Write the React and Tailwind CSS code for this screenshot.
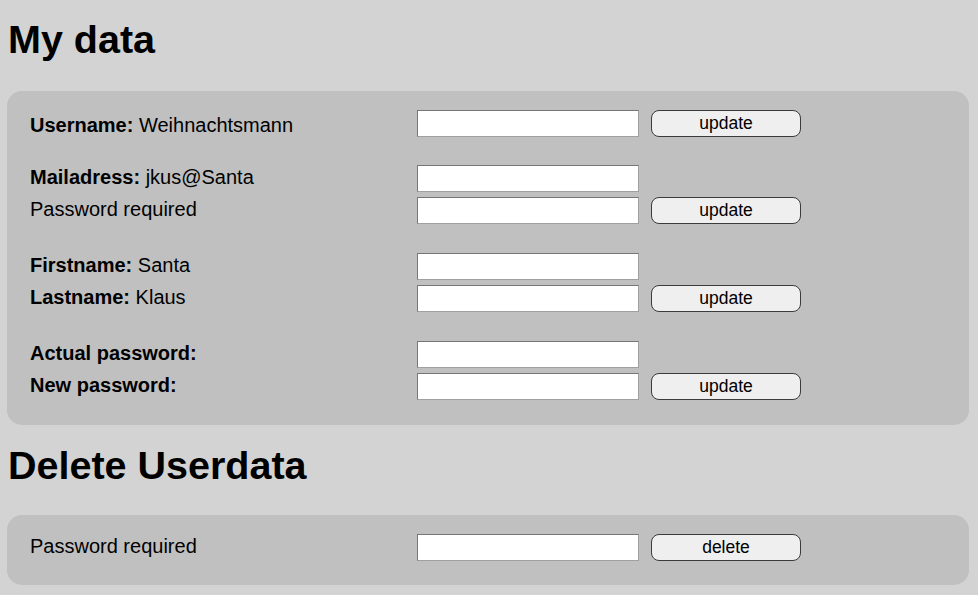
import React from 'react';

const font = { fontFamily: '"Liberation Sans", Arial, sans-serif' };

function Field() {
    return (
        <input
            type="text"
            className="w-[222px] h-[27px] bg-white border border-[#767676] border-b-[#a0a0a0] border-r-[#a0a0a0] outline-none"
        />
    );
}

function Btn({ children }) {
    return (
        <button className="ml-[12px] w-[150px] h-[27px] rounded-[8px] border border-[#3b3b3b] bg-[#efefef] text-[17.5px] leading-none text-black">
            {children}
        </button>
    );
}

function Row({ label, value, text, button, low }) {
    return (
        <div className="flex items-center h-[27px]">
            <div className={`w-[387px] text-[20px] leading-[23px] text-black ${low ? 'pt-[3px]' : 'pb-[3px]'}`}>
                {label && <b>{label}</b>}
                {value && <span> {value}</span>}
                {text}
            </div>
            <Field />
            {button && <Btn>{button}</Btn>}
        </div>
    );
}

export default function App() {
    return (
        <div style={font} className="min-h-screen bg-[#d3d3d3] pl-[7px] pr-[9px] pt-[16px] text-black">
            <h1 className="pl-[1px] text-[39.5px] leading-[46px] font-bold">My data</h1>

            <div className="mt-[29px] rounded-[15px] bg-[#c0c0c0] pt-[19px] pb-[25px] pl-[23px] flex flex-col">
                <Row label="Username:" value="Weihnachtsmann" button="update" low />

                <div className="mt-[28px] flex flex-col gap-[5px]">
                    <Row label="Mailadress:" value="jkus@Santa" />
                    <Row text="Password required" button="update" />
                </div>

                <div className="mt-[29px] flex flex-col gap-[5px]">
                    <Row label="Firstname:" value="Santa" />
                    <Row label="Lastname:" value="Klaus" button="update" />
                </div>

                <div className="mt-[29px] flex flex-col gap-[5px]">
                    <Row label="Actual password:" />
                    <Row label="New password:" button="update" />
                </div>
            </div>

            <h1 className="mt-[17px] pl-[1px] text-[39.5px] leading-[46px] font-bold">Delete Userdata</h1>

            <div className="mt-[27px] rounded-[15px] bg-[#c0c0c0] pt-[19px] pb-[24px] pl-[23px] flex flex-col">
                <Row text="Password required" button="delete" />
            </div>
        </div>
    );
}
